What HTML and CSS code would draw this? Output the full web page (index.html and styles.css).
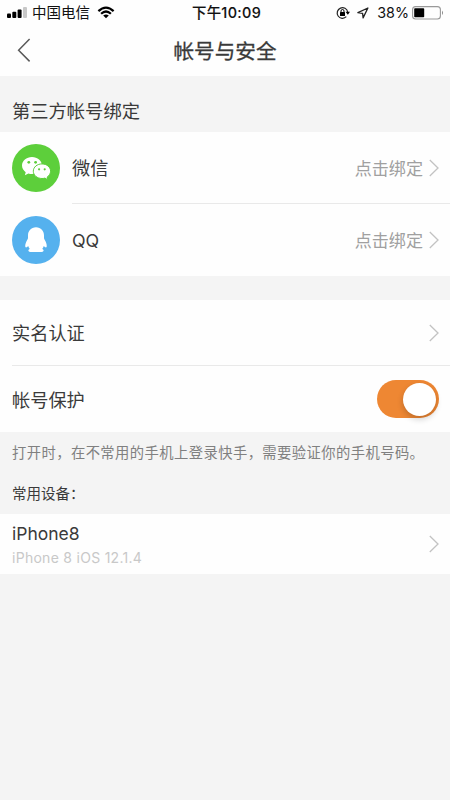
FILE: index.html
```html
<!DOCTYPE html>
<html lang="zh-CN">
<head>
<meta charset="utf-8">
<meta name="viewport" content="width=device-width, initial-scale=1">
<title>帐号与安全</title>
<link rel="stylesheet" href="styles.css">
</head>
<body>
<div class="status">
  <div class="status-left">
    <svg class="signal" width="20" height="12" viewBox="0 0 20 12"><rect x="0" y="6.6" width="4" height="4.4" rx="1"/><rect x="5.3" y="4.8" width="4" height="6.2" rx="1"/><rect x="10.6" y="2.6" width="4" height="8.4" rx="1"/><rect x="16" y="0" width="4" height="11" rx="1" fill="#c8c8c8"/></svg>
    <span class="carrier">中国电信</span>
    <svg class="wifi" width="18" height="13" viewBox="0 0 18 13"><path d="M1.4 5.1Q9-2 16.6 5.1M4.1 7.8Q9 3.2 13.9 7.8" fill="none" stroke="#000" stroke-width="2.2"/><path d="M6.2 9.6Q9 7.2 11.8 9.6L9 12.3Z"/></svg>
  </div>
  <div class="time">下午10:09</div>
  <div class="status-right">
    <svg width="15" height="14" viewBox="0 0 15 14"><path d="M10.300 10.700A5.300 5.300 0 1 1 11.700 6" fill="none" stroke="#222" stroke-width="1.2"/><path d="M9.600 5.800h4.400l-2.200 3z"/><rect x="4" y="6" width="5" height="3.900" rx=".5"/><path d="M5 6.200V5a1.500 1.500 0 0 1 3 0v1.200" fill="none" stroke="#000"/></svg>
    <svg class="locate" width="12" height="12" viewBox="0 0 12 12"><path d="M10.900 1L.9 5.700l4.700.7.5 4.500z" fill="none" stroke="#222" stroke-width="1.3" stroke-linejoin="round"/></svg>
    <span class="percent">38%</span>
    <svg class="battery" width="32" height="14" viewBox="0 0 32 14"><rect x=".6" y=".6" width="27.800" height="12.400" rx="3" fill="none" stroke="#999" stroke-width="1.1"/><rect x="2.200" y="2.300" width="10" height="9" rx=".8"/><path d="M30 4.500q2 2.300 0 4.600z" fill="#888"/></svg>
  </div>
</div>
<header class="nav">
  <svg class="back" width="14" height="24" viewBox="0 0 14 24"><path d="M12.600 1L1.600 12.200l11 11.200" fill="none" stroke="#5a5a5a" stroke-width="1.5"/></svg>
  <h1>帐号与安全</h1>
</header>
<main>
  <h2>第三方帐号绑定</h2>
  <section class="group">
    <div class="account">
      <svg class="logo" width="48" height="48" viewBox="0 0 48 48"><circle cx="24" cy="24" r="24" fill="#5dcf3b"/><path d="M20 13c-5.600 0-10 3.800-10 8.600 0 2.800 1.500 5.100 3.700 6.600l-.8 3 3.500-1.800c1.100.4 2.300.6 3.600.6 5.500 0 10-3.800 10-8.400S25.500 13 20 13z" fill="#fff"/><path d="M30 19.900c-4.800 0-8.700 3.200-8.700 7.300s3.900 7.300 8.700 7.300c1 0 2-.1 2.900-.4l2.900 1.600-.6-2.700c2-1.400 3.400-3.500 3.400-5.800 0-4.100-3.900-7.300-8.600-7.300z" fill="#fff" stroke="#5dcf3b" stroke-width="1"/><g fill="#5dcf3b"><circle cx="16.800" cy="18.300" r="1.400"/><circle cx="23.600" cy="18.300" r="1.400"/><circle cx="27.100" cy="25.300" r="1.100"/><circle cx="32.700" cy="25.300" r="1.100"/></g></svg>
      <div class="account-body divided">
        <span class="label">微信</span><span class="action">点击绑定</span>
        <svg class="chevron" width="10" height="18" viewBox="0 0 10 18"><path d="M.8 1l8.200 8-8.200 8"/></svg>
      </div>
    </div>
    <div class="account">
      <svg class="logo" width="48" height="48" viewBox="0 0 48 48"><circle cx="24" cy="24" r="24" fill="#55b1ee"/><path d="M24 11.200c-5 0-8 3.700-8 8.300v2.200c0 1.400-.9 2.300-1.600 3.800-.9 1.900-1.500 4.300-1 5.600.5 1 1.900.1 2.800-1 .3 1.100.8 2 1.600 2.800-1 .4-1.500.9-1.400 1.600.1 1.200 1.400 1.500 3.400 1.500h8.400c2 0 3.300-.3 3.400-1.500.1-.7-.4-1.200-1.400-1.600.8-.8 1.300-1.700 1.600-2.800.9 1.100 2.300 2 2.800 1 .5-1.300-.1-3.700-1-5.600-.7-1.500-1.600-2.400-1.600-3.800v-2.200c0-4.600-3-8.300-8-8.300z" fill="#fff"/></svg>
      <div class="account-body">
        <span class="label qq">QQ</span><span class="action">点击绑定</span>
        <svg class="chevron" width="10" height="18" viewBox="0 0 10 18"><path d="M.8 1l8.200 8-8.200 8"/></svg>
      </div>
    </div>
  </section>
  <section class="group settings">
    <div class="row divided">
      <span class="label">实名认证</span>
      <svg class="chevron" width="10" height="18" viewBox="0 0 10 18"><path d="M.8 1l8.200 8-8.200 8"/></svg>
    </div>
    <div class="row">
      <span class="label">帐号保护</span>
      <span class="toggle" role="switch" aria-checked="true"><span class="knob"></span></span>
    </div>
  </section>
  <p class="note">打开时，在不常用的手机上登录快手，需要验证你的手机号码。</p>
  <h3>常用设备：</h3>
  <section class="group device">
    <div class="device-text"><div class="device-name">iPhone8</div><div class="device-os">iPhone 8 iOS 12.1.4</div></div>
    <svg class="chevron" width="10" height="18" viewBox="0 0 10 18"><path d="M.8 1l8.200 8-8.200 8"/></svg>
  </section>
</main>
</body>
</html>
```
FILE: styles.css
```css
* { box-sizing: border-box; }
body {
  margin: 0;
  min-height: 800px;
  background: #f4f4f4;
  color: #3a3a3a;
  font-family: Inter, "Noto Sans CJK SC", sans-serif;
}
h1, h2, h3, p { margin: 0; font-weight: 400; white-space: nowrap; }
svg { display: block; flex: none; }
.status {
  display: grid;
  grid-template-columns: 1fr auto 1fr;
  align-items: center;
  height: 25px;
  padding: 0 6px 0 7px;
  background: #fefefe;
  color: #111;
  font-size: 14.5px;
  line-height: 25px;
  white-space: nowrap;
}
.status-left, .status-right { display: flex; align-items: center; }
.status-right { justify-content: flex-end; }
.carrier { margin-left: 5px; }
.wifi { margin-left: 7px; }
.time { padding-left: 2px; font-size: 14.4px; font-weight: 500; letter-spacing: .35px; -webkit-text-stroke: .1px #111; }
.locate { margin-left: 6px; }
.percent { margin-left: 8px; font-size: 14.3px; line-height: 25px; }
.battery { margin-left: 3px; }
.nav {
  display: grid;
  grid-template-columns: 40px 1fr 40px;
  align-items: center;
  height: 51px;
  background: #fefefe;
}
.back { margin: 0 0 1px 17px; }
h1 {
  padding-top: 2px;
  text-align: center;
  font-size: 20.6px;
  line-height: 30px;
  -webkit-text-stroke: .3px #3a3a3a;
}
h2 { height: 56px; padding: 8px 12px 0; font-size: 18.3px; line-height: 55px; }
.group { background: #fefefe; }
.account { display: flex; height: 72px; padding-left: 12px; align-items: center; }
.account-body {
  display: flex;
  flex: 1;
  align-items: center;
  height: 72px;
  margin-left: 12px;
  padding-right: 11px;
}
.divided { border-bottom: 1px solid #e9e9e9; }
.label { flex: 1; padding-top: 1px; font-size: 18.2px; line-height: 28px; }
.qq { font-size: 17.8px; }
.action { padding-top: 2px; color: #a0a0a0; font-size: 17.1px; line-height: 26px; }
.chevron { margin-left: 6px; fill: none; stroke: #c3c3c3; stroke-width: 1.3; }
.settings { margin-top: 24px; }
.row { display: flex; align-items: center; height: 66px; margin-left: 12px; padding-right: 11px; }
.toggle {
  display: flex;
  justify-content: flex-end;
  align-items: center;
  width: 62px;
  height: 38px;
  padding-right: 3px;
  border-radius: 19px;
  background: #ee8733;
}
.knob { width: 33px; height: 33px; border-radius: 50%; background: #fff; box-shadow: 0 3px 6px rgba(0, 0, 0, .2); }
.note { padding: 9px 12px 0; color: #808080; font-size: 14.3px; letter-spacing: .43px; line-height: 24px; }
h3 { height: 49px; padding: 17px 12px 0; font-size: 14.5px; line-height: 24px; }
.device { display: flex; align-items: center; height: 60px; padding: 0 11px 0 12px; }
.device-text { flex: 1; padding-top: 2px; }
.device-name { font-size: 17.5px; line-height: 26px; }
.device-os { color: #c8c8c8; font-size: 14px; letter-spacing: .28px; line-height: 22px; }
```
